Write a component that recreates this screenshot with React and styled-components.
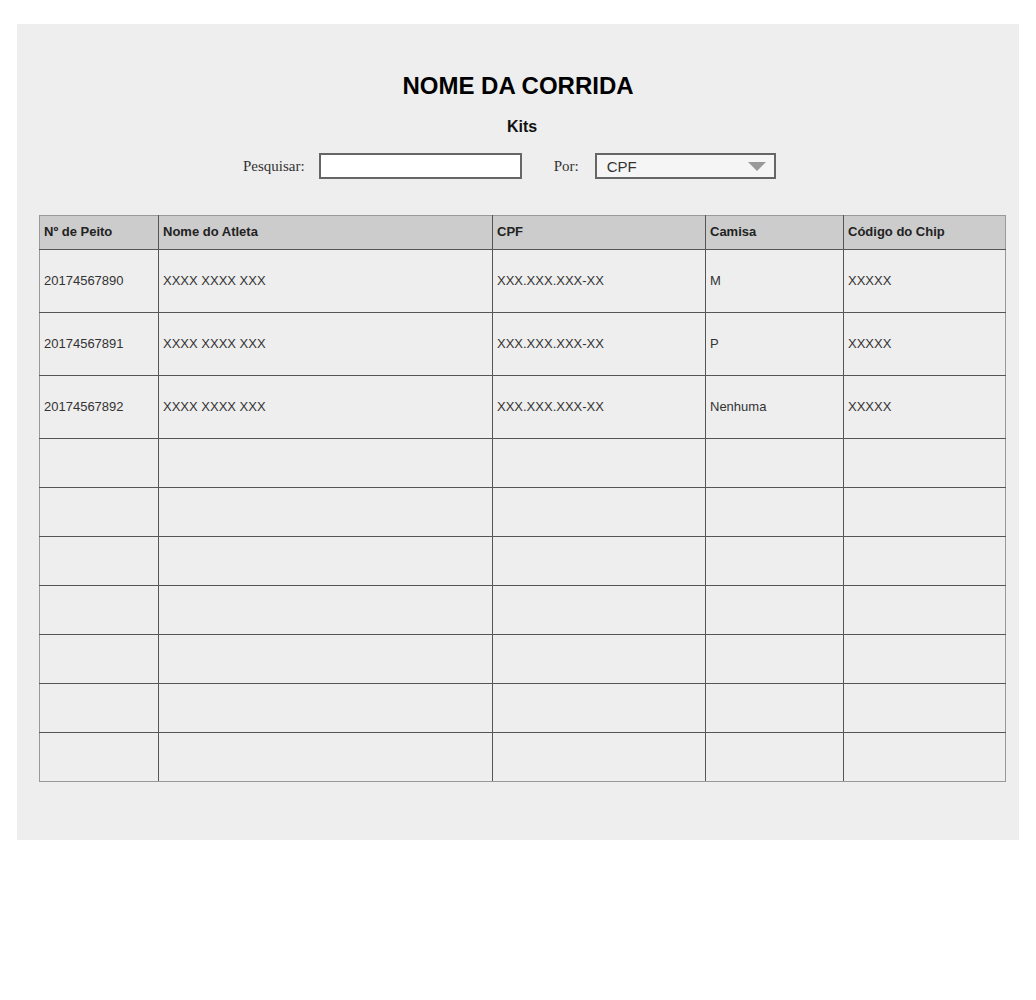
import React from 'react';
import styled, { createGlobalStyle } from 'styled-components';

const GlobalStyle = createGlobalStyle`
  body {
    margin: 0;
    background: #ffffff;
    font-family: "Liberation Sans", Arial, sans-serif;
  }
`;

const Panel = styled.div`
  box-sizing: border-box;
  width: 1002px;
  height: 816px;
  margin: 24px 0 0 17px;
  padding: 47px 0 0 22px;
  background: #eeeeee;
`;

const Title = styled.h1`
  margin: 0;
  padding-right: 22px;
  text-align: center;
  font-size: 24px;
  line-height: 30px;
  font-weight: bold;
  color: #000;
`;

const Subtitle = styled.h2`
  margin: 16px 0 0;
  padding-right: 14px;
  text-align: center;
  font-size: 16px;
  line-height: 20px;
  font-weight: bold;
  color: #111;
`;

const SearchRow = styled.div`
  display: flex;
  align-items: center;
  margin: 16px 0 0 204px;
  height: 26px;
`;

const Label = styled.span`
  font-family: "Liberation Serif", "Times New Roman", serif;
  font-size: 15px;
  color: #333;
  margin-right: ${({ gap }) => gap}px;
`;

const SearchInput = styled.input`
  box-sizing: border-box;
  width: 203px;
  height: 26px;
  border: 2px solid #666;
  background: #fff;
  margin: 0 32px 0 0;
  padding: 0 6px;
  outline: none;
`;

const Select = styled.div`
  box-sizing: border-box;
  width: 181px;
  height: 26px;
  border: 2px solid #666;
  background: #f5f5f5;
  display: flex;
  align-items: center;
  justify-content: space-between;
  padding: 0 8px 0 10px;
  font-size: 15px;
  color: #333;
`;

const Arrow = styled.span`
  width: 0;
  height: 0;
  border-left: 9px solid transparent;
  border-right: 9px solid transparent;
  border-top: 9px solid #999;
`;

const Table = styled.table`
  margin-top: 36px;
  width: 967px;
  border-collapse: collapse;
  border: 1px solid #999;
  table-layout: fixed;
  font-size: 13px;
`;

const Th = styled.th`
  background: #cccccc;
  height: 31px;
  padding: 0 4px 2px;
  text-align: left;
  font-weight: bold;
  color: #222;
  border: 1px solid #555;
  border-top-color: #999;
  &:first-child { border-left-color: #999; }
  &:last-child { border-right-color: #999; }
`;

const Td = styled.td`
  height: ${({ tall }) => (tall ? 60 : 46)}px;
  padding: 0 4px 2px;
  color: #333;
  border: 1px solid #555;
  &:first-child { border-left-color: #999; }
  &:last-child { border-right-color: #999; }
`;

const Row = styled.tr`
  &:last-child td { border-bottom-color: #999; }
`;

const columns = [
  { name: 'Nº de Peito', width: 119 },
  { name: 'Nome do Atleta', width: 334 },
  { name: 'CPF', width: 213 },
  { name: 'Camisa', width: 138 },
  { name: 'Código do Chip', width: 162 },
];

const athletes = [
  ['20174567890', 'XXXX XXXX XXX', 'XXX.XXX.XXX-XX', 'M', 'XXXXX'],
  ['20174567891', 'XXXX XXXX XXX', 'XXX.XXX.XXX-XX', 'P', 'XXXXX'],
  ['20174567892', 'XXXX XXXX XXX', 'XXX.XXX.XXX-XX', 'Nenhuma', 'XXXXX'],
];

const emptyRows = 7;

export default function App() {
  return (
    <>
      <GlobalStyle />
      <Panel>
        <Title>NOME DA CORRIDA</Title>
        <Subtitle>Kits</Subtitle>
        <SearchRow>
          <Label gap={14}>Pesquisar:</Label>
          <SearchInput type="text" />
          <Label gap={16}>Por:</Label>
          <Select>
            CPF
            <Arrow />
          </Select>
        </SearchRow>
        <Table>
          <colgroup>
            {columns.map((c) => (
              <col key={c.name} style={{ width: c.width }} />
            ))}
          </colgroup>
          <thead>
            <tr>
              {columns.map((c) => (
                <Th key={c.name}>{c.name}</Th>
              ))}
            </tr>
          </thead>
          <tbody>
            {athletes.map((a) => (
              <Row key={a[0]}>
                {a.map((v, i) => (
                  <Td tall key={i}>{v}</Td>
                ))}
              </Row>
            ))}
            {Array.from({ length: emptyRows }).map((_, r) => (
              <Row key={'e' + r}>
                {columns.map((c) => (
                  <Td key={c.name} />
                ))}
              </Row>
            ))}
          </tbody>
        </Table>
      </Panel>
    </>
  );
}
